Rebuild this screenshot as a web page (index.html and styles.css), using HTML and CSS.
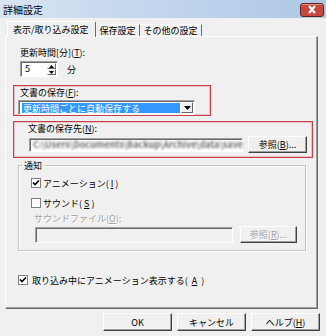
FILE: index.html
```html
<!DOCTYPE html>
<html lang="ja">
<head>
    <meta charset="UTF-8">
    <title>詳細設定</title>
    <link rel="stylesheet" href="styles.css">
</head>
<body>

    <!-- Title Bar -->
    <div class="titlebar">
        <span class="title">詳細設定</span>
        <div class="close">
            <svg width="12" height="9" viewBox="0 0 12 9">
                <path d="M3 1 L9 8 M9 1 L3 8" stroke="#fff" stroke-width="2.2" fill="none"/>
            </svg>
        </div>
    </div>

    <!-- Tabs -->
    <div class="tabs">
        <div class="tab active">表示/取り込み設定</div>
        <div class="tab">保存設定</div>
        <div class="tab">その他の設定</div>
    </div>

    <!-- Tab Page -->
    <div class="panel">

        <div class="time">
            <div class="label">更新時間[分](<u>T</u>):</div>
            <div class="spin-row">
                <div class="spin">
                    <span class="spin-value">5</span>
                    <div class="spin-btns">
                        <span class="spin-btn"><svg width="5" height="3" viewBox="0 0 5 3"><path d="M2.5 0 L5 3 L0 3 Z" fill="#000"/></svg></span>
                        <span class="spin-btn"><svg width="5" height="3" viewBox="0 0 5 3"><path d="M0 0 L5 0 L2.5 3 Z" fill="#000"/></svg></span>
                    </div>
                </div>
                <span class="unit">分</span>
            </div>
        </div>

        <div class="mark mark-save">
            <div class="label">文書の保存(<u>F</u>):</div>
            <div class="combo">
                <span class="combo-text">更新時間ごとに自動保存する</span>
                <span class="combo-btn">
                    <svg width="7" height="4" viewBox="0 0 7 4"><path d="M0 0 L7 0 L3.5 4 Z" fill="#000"/></svg>
                </span>
            </div>
        </div>

        <div class="mark mark-dest">
            <div class="label">文書の保存先(<u>N</u>):</div>
            <div class="dest-row">
                <div class="field path"><span>C:\Users\Documents\Backup\Archive\data\save</span></div>
                <button class="btn browse">参照(<u>B</u>)...</button>
            </div>
        </div>

        <fieldset class="group">
            <legend>通知</legend>
            <div class="check">
                <span class="box">
                    <svg width="8" height="8" viewBox="0 0 8 8"><path d="M1 3.5 L3 5.5 L7 1.5" stroke="#000" stroke-width="1.6" fill="none"/></svg>
                </span>
                アニメーション(<u>I</u>)
            </div>
            <div class="check second">
                <span class="box"></span>
                サウンド(<u>S</u>)
            </div>
            <div class="label sound-label disabled">サウンドファイル(<u>O</u>):</div>
            <div class="dest-row sound-row">
                <div class="field off"></div>
                <button class="btn off">参照(<u>R</u>)...</button>
            </div>
        </fieldset>

        <div class="check last">
            <span class="box">
                <svg width="8" height="8" viewBox="0 0 8 8"><path d="M1 3.5 L3 5.5 L7 1.5" stroke="#000" stroke-width="1.6" fill="none"/></svg>
            </span>
            取り込み中にアニメーション表示する(<u>A</u>)
        </div>

    </div>

    <!-- Dialog Buttons -->
    <div class="footer">
        <button class="btn">OK</button>
        <button class="btn">キャンセル</button>
        <button class="btn">ヘルプ(<u>H</u>)</button>
    </div>

</body>
</html>
```

FILE: styles.css
```css
body {
    font-family: "Noto Sans CJK JP", "Liberation Sans", sans-serif;
    font-size: 9px;
    line-height: 11px;
    color: #000;
    margin: 0;
    width: 326px;
    height: 336px;
    overflow: hidden;
    background-color: #f0f0f0;
}
u {
    text-underline-offset: 1px;
}
.titlebar {
    height: 18px;
    display: flex;
    align-items: center;
    justify-content: space-between;
    padding: 0 2px 0 3px;
    background: linear-gradient(to right, #d9e4f2, #c3d6ed 45%, #aec8e6);
    box-sizing: border-box;
}
.title {
    font-size: 10px;
}
.close {
    width: 24px;
    height: 14px;
    display: flex;
    align-items: center;
    justify-content: center;
    border: 1px solid #5e2420;
    border-radius: 3px;
    background-color: #c9483e;
    box-shadow: inset 0 1px 0 #e39088;
    box-sizing: border-box;
    margin-top: 1px;
}

/* tabs */
.tabs {
    display: flex;
    align-items: flex-end;
    height: 15px;
    margin-top: 3px;
    padding-left: 7px;
}
.tab {
    height: 12px;
    line-height: 12px;
    padding: 0 3px;
    border-top: 1px solid #fff;
    border-left: 1px solid #fff;
    border-right: 1px solid #696969;
    box-sizing: border-box;
    background-color: #f0f0f0;
}
.tab.active {
    position: relative;
    z-index: 1;
    height: 16px;
    line-height: 15px;
    margin-bottom: -1px;
    padding: 0 6px 0 5px;
    border-radius: 2px 2px 0 0;
}
.tab + .tab {
    border-left: none;
    padding-left: 4px;
}
.panel {
    height: 273px;
    margin: 0 8px 0 5px;
    border-top: 1px solid #fff;
    border-left: 1px solid #fff;
    border-right: 1px solid #696969;
    border-bottom: 1px solid #696969;
    box-shadow: inset -1px -1px 0 #a0a0a0;
    box-sizing: border-box;
    display: flex;
    flex-direction: column;
    align-items: flex-start;
}

/* sunken controls */
.spin, .combo, .field {
    background-color: #fff;
    border-top: 1px solid #a0a0a0;
    border-left: 1px solid #a0a0a0;
    border-right: 1px solid #fff;
    border-bottom: 1px solid #fff;
    box-shadow: inset 1px 1px 0 #696969;
    box-sizing: border-box;
}

.time {
    margin: 10px 0 0 14px;
}
.spin-row {
    display: flex;
    align-items: center;
    margin-top: 3px;
}
.spin {
    width: 38px;
    height: 16px;
    display: flex;
    justify-content: space-between;
    padding: 1px 1px 1px 4px;
}
.spin-value {
    line-height: 12px;
}
.spin-btns {
    display: flex;
    flex-direction: column;
    width: 9px;
}
.spin-btn {
    flex: 1;
    display: flex;
    align-items: center;
    justify-content: center;
    background-color: #f0f0f0;
    border-top: 1px solid #fff;
    border-left: 1px solid #fff;
    border-right: 1px solid #696969;
    border-bottom: 1px solid #696969;
}
.unit {
    margin-left: 9px;
}

/* red annotation frames */
.mark {
    margin-left: 7px;
    border: 1px solid #c9404a;
    box-shadow: inset 0 0 0 1px rgba(214, 110, 118, 0.35);
    box-sizing: border-box;
}
.mark-save {
    width: 198px;
    height: 31px;
    margin-top: 8px;
    padding: 1px 0 0 4px;
}
.mark-save .label {
    margin-left: 2px;
}
.combo {
    width: 177px;
    height: 15px;
    margin-top: 2px;
    display: flex;
    padding: 1px;
}
.combo-text {
    flex: 1;
    margin: 1px 1px 0 2px;
    padding-left: 1px;
    line-height: 11px;
    background-color: #3399ff;
    color: #fff;
}
.combo-btn {
    width: 12px;
    display: flex;
    align-items: center;
    justify-content: center;
    background-color: #f0f0f0;
    border-top: 1px solid #fff;
    border-left: 1px solid #fff;
    border-right: 1px solid #696969;
    border-bottom: 1px solid #696969;
    box-sizing: border-box;
}
.mark-dest {
    width: 300px;
    height: 37px;
    margin-top: 5px;
    padding: 1px 0 0 14px;
}
.dest-row {
    display: flex;
    align-items: center;
    margin-top: 2px;
}
.path {
    width: 214px;
    height: 14px;
    margin: 0 5px 0 1px;
    white-space: nowrap;
    padding-left: 3px;
    line-height: 12px;
}
.path span {
    color: #6f6f6f;
    filter: blur(0.8px);
    font-weight: bold;
}

/* buttons */
.btn {
    font: inherit;
    color: #000;
    height: 17px;
    padding: 0;
    background-color: #f0f0f0;
    border-top: 1px solid #fff;
    border-left: 1px solid #fff;
    border-right: 1px solid #404040;
    border-bottom: 1px solid #404040;
    box-shadow: inset -1px -1px 0 #a0a0a0;
    box-sizing: border-box;
}
.browse {
    width: 59px;
}

/* notification group */
.group {
    width: 288px;
    height: 91px;
    margin: 2px 0 0 12px;
    padding: 6px 0 0 12px;
    border: 1px solid #c4c4c4;
    box-shadow: 1px 1px 0 #fff, inset 1px 1px 0 #fff;
    box-sizing: border-box;
}
.group legend {
    padding: 0 2px;
    margin-left: -9px;
    line-height: 11px;
}
.check {
    display: flex;
    align-items: center;
    height: 12px;
    gap: 2px;
}
.check.second {
    margin-top: 8px;
}
.box {
    width: 10px;
    height: 10px;
    display: flex;
    align-items: center;
    justify-content: center;
    background-color: #fff;
    border: 1px solid #808080;
    box-sizing: border-box;
}
.disabled, .btn.off {
    color: #a0a0a0;
    text-shadow: 1px 1px 0 #fff;
}
.sound-label {
    margin: 4px 0 0 3px;
}
.sound-row {
    margin: 2px 0 0 4px;
}
.field.off {
    width: 198px;
    height: 16px;
    margin-right: 7px;
    background-color: #f0f0f0;
}
.btn.off {
    width: 57px;
}
.check.last {
    margin: 23px 0 0 12px;
    gap: 4px;
}

/* dialog buttons */
.footer {
    display: flex;
    justify-content: flex-end;
    gap: 5px;
    padding: 4px 6px 0 0;
}
.footer .btn {
    width: 69px;
    height: 18px;
}
```
